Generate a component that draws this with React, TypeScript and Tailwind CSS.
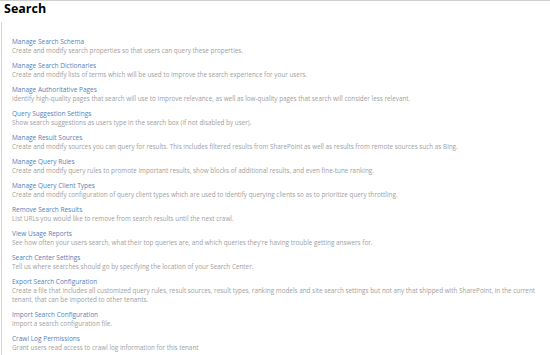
const SETTINGS: { title: string; description: string[] }[] = [
  {
    title: "Manage Search Schema",
    description: ["Create and modify search properties so that users can query these properties."],
  },
  {
    title: "Manage Search Dictionaries",
    description: [
      "Create and modify lists of terms which will be used to improve the search experience for your users.",
    ],
  },
  {
    title: "Manage Authoritative Pages",
    description: [
      "Identify high-quality pages that search will use to improve relevance, as well as low-quality pages that search will consider less relevant.",
    ],
  },
  {
    title: "Query Suggestion Settings",
    description: ["Show search suggestions as users type in the search box (if not disabled by user)."],
  },
  {
    title: "Manage Result Sources",
    description: [
      "Create and modify sources you can query for results. This includes filtered results from SharePoint as well as results from remote sources such as Bing.",
    ],
  },
  {
    title: "Manage Query Rules",
    description: [
      "Create and modify query rules to promote important results, show blocks of additional results, and even fine-tune ranking.",
    ],
  },
  {
    title: "Manage Query Client Types",
    description: [
      "Create and modify configuration of query client types which are used to identify querying clients so as to prioritize query throttling.",
    ],
  },
  {
    title: "Remove Search Results",
    description: ["List URLs you would like to remove from search results until the next crawl."],
  },
  {
    title: "View Usage Reports",
    description: [
      "See how often your users search, what their top queries are, and which queries they're having trouble getting answers for.",
    ],
  },
  {
    title: "Search Center Settings",
    description: ["Tell us where searches should go by specifying the location of your Search Center."],
  },
  {
    title: "Export Search Configuration",
    description: [
      "Create a file that includes all customized query rules, result sources, result types, ranking models and site search settings but not any that shipped with SharePoint, in the current",
      "tenant, that can be imported to other tenants.",
    ],
  },
  {
    title: "Import Search Configuration",
    description: ["Import a search configuration file."],
  },
  {
    title: "Crawl Log Permissions",
    description: ["Grant users read access to crawl log information for this tenant"],
  },
];

export default function App() {
  return (
    <div
      className="h-[355px] w-[550px] overflow-hidden border-t border-[#cfcfcf] bg-white"
      style={{ fontFamily: '"Open Sans", "Noto Sans", sans-serif' }}
    >
      <h1 className="h-[21px] pl-[4px] pt-[1px] text-[12.5px] font-bold leading-[14px] text-black">
        Search
      </h1>
      <div className="ml-[1px] h-full border-l border-[#d4d4d4] pl-[10px] pt-[15px]">
        <ul>
          {SETTINGS.map((s) => (
            <li key={s.title} className="mb-[6px]">
              <a className="block whitespace-nowrap text-[6.5px] leading-[9px] text-[#5682b9]">
                {s.title}
              </a>
              {s.description.map((line) => (
                <p
                  key={line}
                  className="whitespace-nowrap text-[6.35px] leading-[9px] text-[#a0a0a0]"
                >
                  {line}
                </p>
              ))}
            </li>
          ))}
        </ul>
      </div>
    </div>
  );
}
